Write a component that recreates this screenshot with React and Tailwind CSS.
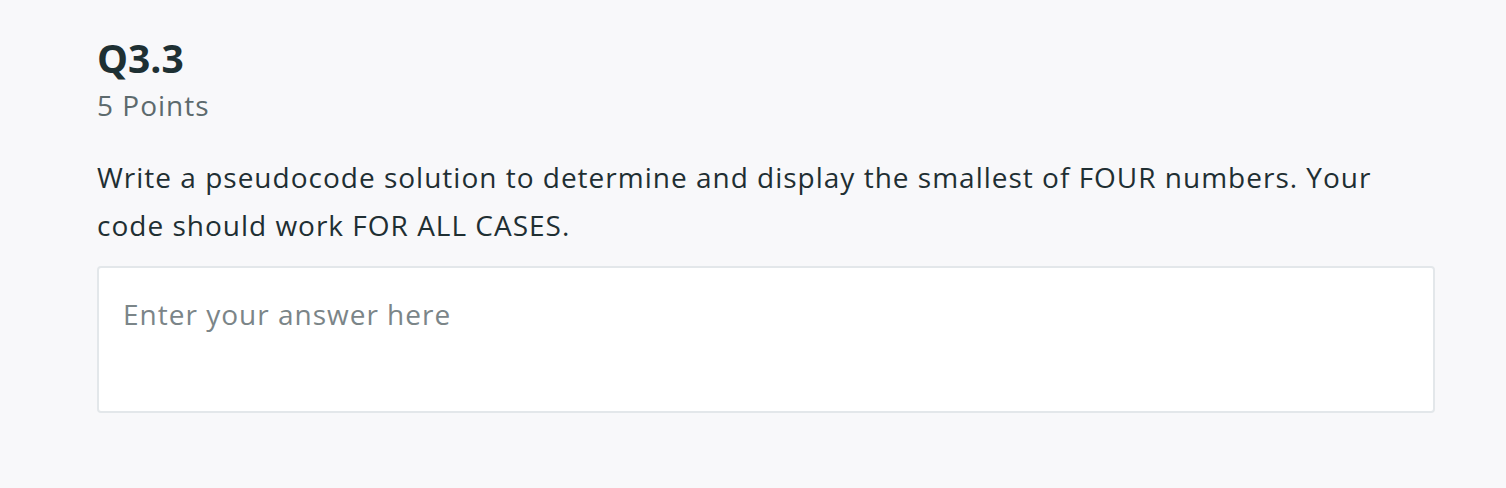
import React from 'react';

const font = { fontFamily: '"Open Sans", Lato, sans-serif' };

export default function App() {
  return (
    <div className="min-h-screen w-full bg-[#f8f8fa] text-[#1f2f33]" style={font}>
      <div className="pl-[97px] pr-[71px] pt-[35px]">
        <h1 className="text-[39px] font-bold leading-[46px] text-[#1e3033]">Q3.3</h1>
        <div className="text-[28px] leading-[48px] tracking-[1px] text-[#5d6a6d]">5 Points</div>

        <p className="mt-[24px] text-[28px] leading-[48px] tracking-[1px] text-[#1f2f33]">
          Write a pseudocode solution to determine and display the smallest of FOUR numbers. Your
          code should work FOR ALL CASES.
        </p>

        <div className="mt-[17px] h-[147px] rounded-[4px] border-2 border-[#e3e7ea] bg-white px-[24px] pt-[29px]">
          <textarea
            className="h-[80px] w-full resize-none bg-transparent text-[28px] leading-[34px] tracking-[1px] text-[#1f2f33] outline-none placeholder:text-[#7b8588]"
            placeholder="Enter your answer here"
            style={font}
          />
        </div>
      </div>
    </div>
  );
}
